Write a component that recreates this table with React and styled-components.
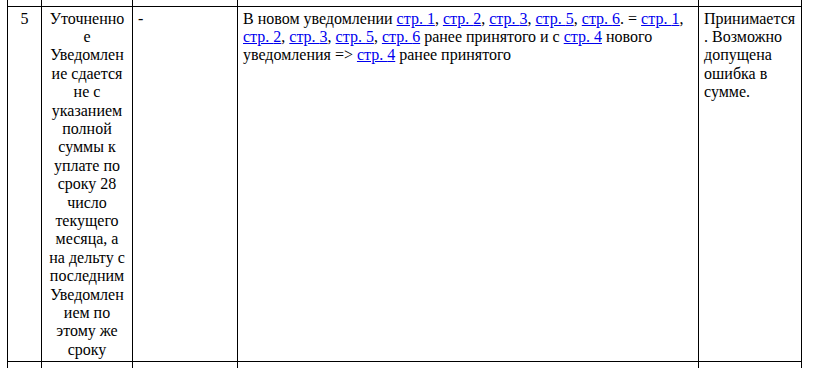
import React from 'react'
import styled, { createGlobalStyle } from 'styled-components'

const Global = createGlobalStyle`
  html, body {
    margin: 0;
    padding: 0;
    background: #fff;
  }
  body {
    font-family: "Liberation Serif", "Times New Roman", serif;
    font-size: 16px;
    color: #000;
  }
`

const Page = styled.div`
  padding-left: 7px;
  height: 368px;
  overflow: hidden;
`

const Table = styled.table`
  border-collapse: collapse;
  table-layout: fixed;
  width: 794px;
  font-family: "Liberation Serif", "Times New Roman", serif;
  font-size: 16px;
`

const Row = styled.tr`
  height: ${props => props.height || 'auto'};
`

const Cell = styled.td`
  border: 1px solid #000;
  border-top: ${props => props.open ? 'none' : '1px solid #000'};
  padding: ${props => props.open ? '0' : '3px 5px 2px'};
  vertical-align: top;
  text-align: ${props => props.center ? 'center' : 'left'};
  font-family: "Liberation Serif", "Times New Roman", serif;
  font-size: 16px;
  line-height: 18.4px;
  color: #000;
  word-break: break-word;
  overflow-wrap: anywhere;
`

const Link = styled.a`
  color: #0000ee;
  text-decoration: underline;
`

const widths = [34, 91, 105, 461, 103]

const PageRef = ({ n }) => <Link href="#">стр. {n}</Link>

export default function App() {
  return (
    <Page>
      <Global />
      <Table>
        <colgroup>
          {widths.map((w, i) => <col key={i} style={{ width: w }} />)}
        </colgroup>
        <tbody>
          <Row height="6px">
            {widths.map((_, i) => <Cell key={i} open />)}
          </Row>
          <Row>
            <Cell center>5</Cell>
            <Cell center>
              Уточненное Уведомление сдается не с указанием полной суммы к уплате по сроку 28 число текущего месяца, а на дельту с последним Уведомлением по этому же сроку
            </Cell>
            <Cell>-</Cell>
            <Cell>
              В новом уведомлении <PageRef n="1" />, <PageRef n="2" />, <PageRef n="3" />, <PageRef n="5" />, <PageRef n="6" />. = <PageRef n="1" />, <PageRef n="2" />, <PageRef n="3" />, <PageRef n="5" />, <PageRef n="6" /> ранее принятого и с <PageRef n="4" /> нового уведомления =&gt; <PageRef n="4" /> ранее принятого
            </Cell>
            <Cell>Принимается. Возможно допущена ошибка в сумме.</Cell>
          </Row>
          <Row height="40px">
            {widths.map((_, i) => <Cell key={i} />)}
          </Row>
        </tbody>
      </Table>
    </Page>
  )
}
